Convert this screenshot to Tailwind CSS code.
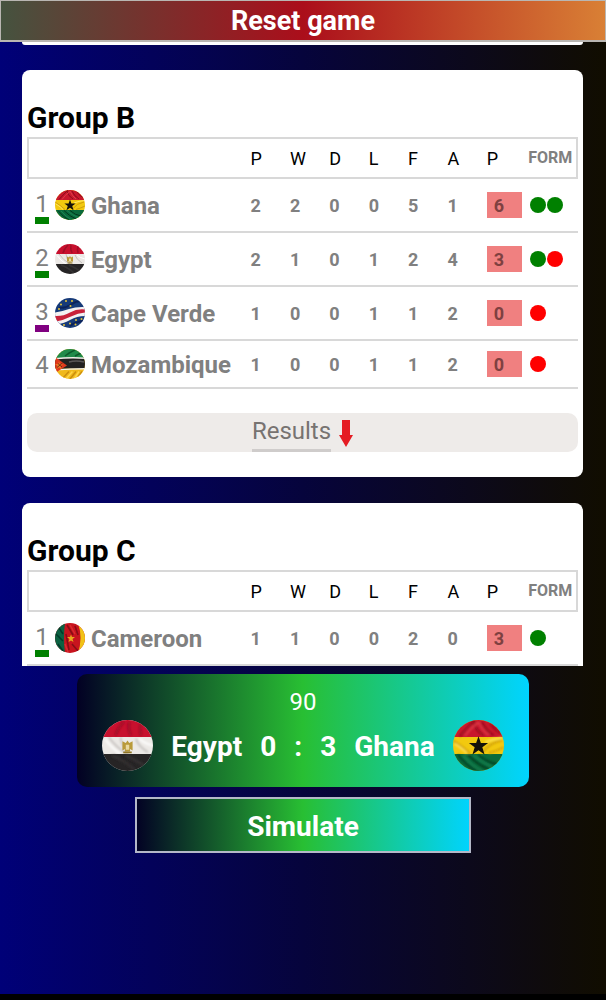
<!DOCTYPE html>
<html lang="en">
<head>
<meta charset="utf-8">
<meta name="viewport" content="width=device-width, initial-scale=1">
<title>Group stage</title>
<script src="https://cdn.jsdelivr.net/npm/@tailwindcss/browser@4"></script>
</head>
<body class="bg-black font-[Roboto,sans-serif]">

<!-- Flag artwork and shared fabric shading -->
<svg class="absolute size-0" aria-hidden="true">
  <defs>
    <clipPath id="disc"><circle cx="30" cy="30" r="30"/></clipPath>
    <filter id="soft" x="-20%" y="-20%" width="140%" height="140%"><feGaussianBlur stdDeviation="1.300"/></filter>
    <symbol id="ghana" viewBox="0 0 60 60">
      <g clip-path="url(#disc)">
        <rect width="60" height="60" fill="#f2c90f"/>
        <rect width="60" height="20" fill="#c8182c"/>
        <rect y="40" width="60" height="20" fill="#096a3c"/>
        <g filter="url(#soft)" fill="none" stroke-width="2">
          <path d="M8 19Q14 12 26 0M24 2Q26 12 36 18M34 2Q38 12 48 18M44 4Q50 14 60 16" stroke="#8d0a1c"/>
          <path d="M14 19Q20 10 30 3M30 2Q34 12 42 18" stroke="#e03a48"/>
          <path d="M0 24Q10 30 20 39M34 39Q44 26 58 24M42 39Q52 36 60 32" stroke="#cf9f0a"/>
          <path d="M2 28Q12 34 16 39M38 26Q48 22 58 21" stroke="#ffe662"/>
          <path d="M6 41Q16 54 28 60M18 41Q28 52 42 58M30 41Q40 50 52 52" stroke="#02391f"/>
          <path d="M12 42Q22 54 34 60M24 41Q34 50 46 55" stroke="#1b8151"/>
        </g>
        <path d="M30 19l2.800 8h8.500l-6.800 5.200 2.600 8.300-7.100-5-7.100 5 2.600-8.300-6.800-5.200h8.500z" fill="#14120a"/>
      </g>
    </symbol>
    <symbol id="egypt" viewBox="0 0 60 60">
      <g clip-path="url(#disc)">
        <rect width="60" height="60" fill="#ece9e6"/>
        <g filter="url(#soft)" fill="none" stroke-width="2">
          <path d="M8 20Q16 32 30 40M22 20Q22 30 30 36M40 22Q42 30 54 38" stroke="#c4c0be"/>
          <path d="M4 23Q12 34 22 40M44 22Q50 28 60 30" stroke="#fff"/>
        </g>
        <rect width="60" height="20" fill="#c8102e"/>
        <rect y="40" width="60" height="20" fill="#262425"/>
        <g filter="url(#soft)" fill="none" stroke-width="3">
          <path d="M16 18Q18 10 26 2M32 2Q30 10 34 18M46 4Q44 12 46 18" stroke="#a00c26"/>
          <path d="M12 42Q24 46 38 58M28 42Q38 46 50 54" stroke="#343233"/>
        </g>
        <path d="M24 25l4 2 2-3 2 3 4-2v11l-3-2v3h-6v-3l-3 2z" fill="#b99a3a"/>
        <path d="M28 29h4v6h-4z" fill="#ead9a0"/>
        <path d="M25 37h10v2H25z" fill="#8f7425"/>
      </g>
    </symbol>
    <symbol id="capeverde" viewBox="0 0 60 60">
      <g clip-path="url(#disc)">
        <rect width="60" height="60" fill="#163a78"/>
        <path d="M0 29Q14 27 28 22T60 18V36Q44 36 30 44T4 52L0 50z" fill="#f3f1f2"/>
        <path d="M0 36Q16 37 30 29T60 23V29Q46 30 32 37T2 47L0 46z" fill="#c9213a"/>
        <path d="M8 20Q22 20 34 12T56 8M30 56Q40 48 56 46" fill="none" stroke="#0a2358" stroke-width="4" filter="url(#soft)"/>
        <g fill="#e6c436"><circle cx="8" cy="22" r="2"/><circle cx="12" cy="13" r="2"/><circle cx="22" cy="6" r="2"/><circle cx="34" cy="6" r="2"/><circle cx="31" cy="16" r="2"/><circle cx="18" cy="54" r="2"/><circle cx="30" cy="51" r="2"/><circle cx="42" cy="44" r="2"/><circle cx="53" cy="42" r="2"/><circle cx="41" cy="53" r="2"/></g>
      </g>
    </symbol>
    <symbol id="mozambique" viewBox="0 0 60 60">
      <g clip-path="url(#disc)">
        <rect width="60" height="60" fill="#f0b91c"/>
        <rect width="60" height="19" fill="#218a4a"/>
        <path d="M0 18Q30 15 60 17V21Q30 19 0 22zM0 40Q30 38 60 38V41Q30 41 0 43z" fill="#f2efe9"/>
        <path d="M0 21Q30 18 60 20V38Q30 38 0 40z" fill="#232121"/>
        <path d="M0 16L24 33 0 48z" fill="#e0381c"/>
        <path d="M8 25l2 5h6l-5 4 2 6-5-3-5 3 2-6-5-4h6z" fill="#ee7a24"/>
        <path d="M4 37l11-9M6 29l8 7" stroke="#4a1c14" stroke-width="1.500"/>
        <g fill="none" stroke-width="3" filter="url(#soft)">
          <path d="M14 60L28 45M30 60L42 45M46 56L54 45" stroke="#cc8f0c"/>
          <path d="M22 60L35 45M38 60L48 45" stroke="#ffd548"/>
          <path d="M20 14Q30 6 40 2M40 14L52 8" stroke="#0b5a2a"/>
          <path d="M28 26Q42 22 58 26" stroke="#5a5656"/>
        </g>
      </g>
    </symbol>
    <symbol id="cameroon" viewBox="0 0 60 60">
      <g clip-path="url(#disc)">
        <rect width="60" height="60" fill="#c8141e"/>
        <path d="M0 0H20Q16 30 20 60H0z" fill="#0c6142"/>
        <path d="M46 0H60V60H46Q56 30 46 0z" fill="#f1c316"/>
        <g fill="none" stroke-width="3" filter="url(#soft)">
          <path d="M24 4L36 24M22 22L28 54M40 6L46 24M34 42L46 56" stroke="#860a14"/>
          <path d="M30 4L40 22M20 42L26 58" stroke="#da2b30"/>
          <path d="M2 22L16 36M6 42L16 56M8 10L16 22" stroke="#053d2a"/>
        </g>
        <path d="M32 23l2 5h6l-5 4 2 6-5-3-5 3 2-6-5-4h6z" fill="#e9a91d"/>
      </g>
    </symbol>
  </defs>
</svg>

<div class="flex h-screen flex-col pb-1.5">
  <div class="flex min-h-0 flex-1 flex-col bg-linear-to-r/srgb from-[#000078] via-[#06043c] via-50% to-[#110d00]">

    <button class="flex h-[42px] w-full shrink-0 items-center justify-center border border-[#b9b6b2] border-b-2 bg-linear-to-r/srgb from-[#45533f] via-[#ab0e1b] to-[#d98035] bg-origin-border pt-px text-[27px] font-bold text-white">Reset game</button>

    <main class="flex min-h-0 flex-1 flex-col overflow-hidden pr-[23px] pl-[22px]">
      <div class="h-[3px] shrink-0 rounded-b-lg bg-white"></div>

      <section class="mt-[25px] shrink-0 rounded-lg bg-white px-[5px] pt-[30px] pb-[25px]">
        <h2 class="mb-px text-[30px] leading-9 font-bold text-black">Group B</h2>
        <table class="w-full table-fixed border-separate border-spacing-0 text-left text-[18px] text-[#808080]">
          <thead class="text-black">
            <tr class="h-[42px] *:border-y-2 *:border-[#d8d8d8] *:p-0 *:font-normal">
              <th class="border-l-2" aria-label="Team"></th>
              <th class="w-[7.15%]">P</th><th class="w-[7.15%]">W</th><th class="w-[7.15%]">D</th><th class="w-[7.15%]">L</th><th class="w-[7.15%]">F</th><th class="w-[7.15%]">A</th><th class="w-[7.15%]">P</th>
              <th class="w-[9.4%] border-r-2"><span class="block pl-0.5 text-[16px] font-bold text-[#808080]">FORM</span></th>
            </tr>
          </thead>
          <tbody class="font-bold">
            <tr class="h-[54px] *:border-b-2 *:border-[#d8d8d8] *:p-0">
              <td><div class="flex items-center pl-2"><div class="w-[14px] pt-1 text-center text-[24px] leading-[26px] font-normal">1<div class="h-[7px] bg-[#008000]"></div></div><svg class="mr-1.5 ml-1.5 size-[30px]" role="img" aria-label="Flag of Ghana"><use href="#ghana"/></svg><span class="pt-0.5 text-[24px]">Ghana</span></div></td>
              <td>2</td><td>2</td><td>0</td><td>0</td><td>5</td><td>1</td>
              <td><div class="mr-1 h-[26px] bg-[#f08080] pl-[7px] leading-7 text-[#7f4040]">6</div></td>
              <td><div class="flex gap-px pl-1"><i class="size-4 rounded-full bg-[#008000]"></i><i class="size-4 rounded-full bg-[#008000]"></i></div></td>
            </tr>
            <tr class="h-[54px] *:border-b-2 *:border-[#d8d8d8] *:p-0">
              <td><div class="flex items-center pl-2"><div class="w-[14px] pt-1 text-center text-[24px] leading-[26px] font-normal">2<div class="h-[7px] bg-[#008000]"></div></div><svg class="mr-1.5 ml-1.5 size-[30px]" role="img" aria-label="Flag of Egypt"><use href="#egypt"/></svg><span class="pt-0.5 text-[24px]">Egypt</span></div></td>
              <td>2</td><td>1</td><td>0</td><td>1</td><td>2</td><td>4</td>
              <td><div class="mr-1 h-[26px] bg-[#f08080] pl-[7px] leading-7 text-[#7f4040]">3</div></td>
              <td><div class="flex gap-px pl-1"><i class="size-4 rounded-full bg-[#008000]"></i><i class="size-4 rounded-full bg-[#ff0000]"></i></div></td>
            </tr>
            <tr class="h-[54px] *:border-b-2 *:border-[#d8d8d8] *:p-0">
              <td><div class="flex items-center pl-2"><div class="w-[14px] pt-1 text-center text-[24px] leading-[26px] font-normal">3<div class="h-[7px] bg-[#800080]"></div></div><svg class="mr-1.5 ml-1.5 size-[30px]" role="img" aria-label="Flag of Cape Verde"><use href="#capeverde"/></svg><span class="pt-0.5 text-[24px] whitespace-nowrap">Cape Verde</span></div></td>
              <td>1</td><td>0</td><td>0</td><td>1</td><td>1</td><td>2</td>
              <td><div class="mr-1 h-[26px] bg-[#f08080] pl-[7px] leading-7 text-[#7f4040]">0</div></td>
              <td><div class="flex gap-px pl-1"><i class="size-4 rounded-full bg-[#ff0000]"></i></div></td>
            </tr>
            <tr class="h-12 *:border-b-2 *:border-[#d8d8d8] *:p-0">
              <td><div class="flex items-center pl-2"><div class="w-[14px] pt-0.5 text-center text-[24px] leading-[26px] font-normal">4</div><svg class="mr-1.5 ml-1.5 size-[30px]" role="img" aria-label="Flag of Mozambique"><use href="#mozambique"/></svg><span class="pt-0.5 text-[24px]">Mozambique</span></div></td>
              <td>1</td><td>0</td><td>0</td><td>1</td><td>1</td><td>2</td>
              <td><div class="mr-1 h-[26px] bg-[#f08080] pl-[7px] leading-7 text-[#7f4040]">0</div></td>
              <td><div class="flex gap-px pl-1"><i class="size-4 rounded-full bg-[#ff0000]"></i></div></td>
            </tr>
          </tbody>
        </table>
        <button class="mt-6 flex h-[39px] w-full items-stretch justify-center gap-2 rounded-[10px] bg-[#eeebe9] text-[24px] text-[#777371]">
          <span class="border-b-[3px] border-[#cfcccb] leading-9">Results</span>
          <svg class="mt-[7px] h-[27px] w-[14px]" viewBox="0 0 14 27" aria-hidden="true"><path d="M3 0h8v15h3L7 27 0 15h3z" fill="#e51c23"/></svg>
        </button>
      </section>

      <section class="mt-[26px] shrink-0 rounded-lg bg-white px-[5px] pt-[30px] pb-[25px]">
        <h2 class="mb-px text-[30px] leading-9 font-bold text-black">Group C</h2>
        <table class="w-full table-fixed border-separate border-spacing-0 text-left text-[18px] text-[#808080]">
          <thead class="text-black">
            <tr class="h-[42px] *:border-y-2 *:border-[#d8d8d8] *:p-0 *:font-normal">
              <th class="border-l-2" aria-label="Team"></th>
              <th class="w-[7.15%]">P</th><th class="w-[7.15%]">W</th><th class="w-[7.15%]">D</th><th class="w-[7.15%]">L</th><th class="w-[7.15%]">F</th><th class="w-[7.15%]">A</th><th class="w-[7.15%]">P</th>
              <th class="w-[9.4%] border-r-2"><span class="block pl-0.5 text-[16px] font-bold text-[#808080]">FORM</span></th>
            </tr>
          </thead>
          <tbody class="font-bold">
            <tr class="h-[54px] *:border-b-2 *:border-[#d8d8d8] *:p-0">
              <td><div class="flex items-center pl-2"><div class="w-[14px] pt-1 text-center text-[24px] leading-[26px] font-normal">1<div class="h-[7px] bg-[#008000]"></div></div><svg class="mr-1.5 ml-1.5 size-[30px]" role="img" aria-label="Flag of Cameroon"><use href="#cameroon"/></svg><span class="pt-0.5 text-[24px]">Cameroon</span></div></td>
              <td>1</td><td>1</td><td>0</td><td>0</td><td>2</td><td>0</td>
              <td><div class="mr-1 h-[26px] bg-[#f08080] pl-[7px] leading-7 text-[#7f4040]">3</div></td>
              <td><div class="flex gap-px pl-1"><i class="size-4 rounded-full bg-[#008000]"></i></div></td>
            </tr>
          </tbody>
        </table>
      </section>
    </main>

    <footer class="flex shrink-0 flex-col items-center gap-2.5 pt-2 pb-[141px] font-bold text-white">
      <div class="w-[74.6%] rounded-[10px] bg-linear-to-r/srgb from-[#020024] via-[#28bf33] to-[#00d4ff] pt-[14px] pb-4">
        <p class="text-center text-[24px] leading-7 font-normal">90</p>
        <div class="mt-1 flex items-center justify-center gap-[18px] text-[28px]">
          <svg class="size-[51px]" role="img" aria-label="Flag of Egypt"><use href="#egypt"/></svg>
          <span class="pt-0.5">Egypt</span><span class="pt-0.5">0</span><span class="pt-0.5">:</span><span class="pt-0.5">3</span><span class="pt-0.5">Ghana</span>
          <svg class="size-[51px]" role="img" aria-label="Flag of Ghana"><use href="#ghana"/></svg>
        </div>
      </div>
      <button class="h-14 w-[55.6%] border-2 border-[#b4b8c8] bg-linear-to-r/srgb from-[#020024] via-[#28bf33] to-[#00d4ff] bg-origin-border pt-1 text-[28px]">Simulate</button>
    </footer>
  </div>
</div>
</body>
</html>
